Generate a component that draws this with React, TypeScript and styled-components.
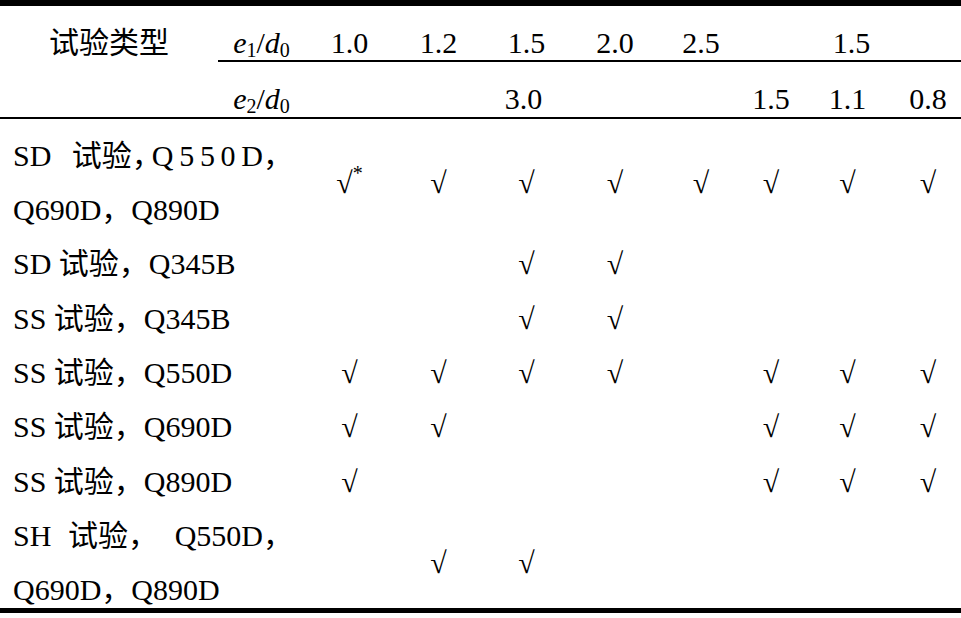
import React from "react";
import styled, { createGlobalStyle } from "styled-components";

const LINE = 54.33;
const FONT = `"Liberation Serif", "Times New Roman", Tinos, "DejaVu Serif", "Noto Sans CJK SC", serif`;

const GlobalStyle = createGlobalStyle`
  html, body { margin: 0; padding: 0; background: #ffffff; }
  body { font-family: ${FONT}; color: #000000; }
`;

const Table = styled.table`
  width: 961px;
  table-layout: fixed;
  border-collapse: separate;
  border-spacing: 0;
  font-family: ${FONT};
  font-size: 30px;
  line-height: ${LINE}px;
  color: #000000;
`;

const Col = styled.col<{ $w: number }>`
  width: ${(p) => p.$w}px;
`;

const HeadCell = styled.th<{ $first?: boolean }>`
  padding: 0;
  font-weight: normal;
  text-align: center;
  vertical-align: baseline;
  white-space: nowrap;
  border-top: ${(p) => (p.$first ? "6px solid #000" : "0")};
  border-bottom: 2px solid #000;
`;

const LabelCell = styled.td<{ $last?: boolean }>`
  padding: 0 12px 0 13px;
  text-align: left;
  vertical-align: baseline;
  white-space: nowrap;
  border-bottom: ${(p) => (p.$last ? "5px solid #000" : "0")};
`;

const MarkCell = styled.td<{ $last?: boolean }>`
  padding: 0;
  text-align: center;
  vertical-align: middle;
  white-space: nowrap;
  border-bottom: ${(p) => (p.$last ? "5px solid #000" : "0")};
`;

const Ink = styled.span`
  display: inline-block;
  line-height: 1;
  vertical-align: -10px;
  white-space: nowrap;
  font-family: ${FONT};
`;

const Ital = styled.i`
  font-style: italic;
`;

const Sub = styled.span`
  font-size: 20px;
  line-height: 0;
  vertical-align: -4px;
`;

const Sup = styled.span`
  font-size: 20px;
  line-height: 0;
  vertical-align: 13px;
`;

const Line = styled.span`
  display: block;
`;

const SpreadLine = styled.span`
  display: block;
  text-align: justify;
  text-align-last: justify;
`;

const Tracked = styled.span<{ $track: number }>`
  letter-spacing: ${(p) => p.$track}px;
`;

const Halt = styled.span`
  font-feature-settings: "halt";
  letter-spacing: 5px;
`;

type Mark = "" | "v" | "v*";

interface Row {
  label: React.ReactNode;
  marks: Mark[];
}

const Ratio: React.FC<{ n: string }> = ({ n }) => (
  <Ink>
    <Ital>e</Ital>
    <Sub>{n}</Sub>/<Ital>d</Ital>
    <Sub>0</Sub>
  </Ink>
);

const rows: Row[] = [
  {
    label: (
      <>
        <SpreadLine>
          <Ink>SD</Ink>{" "}
          <Ink>
            试验<Halt>，</Halt>
            <Tracked $track={5.7}>Q550</Tracked>D，
          </Ink>
        </SpreadLine>
        <Line>
          <Ink>Q690D，Q890D</Ink>
        </Line>
      </>
    ),
    marks: ["v*", "v", "v", "v", "v", "v", "v", "v"],
  },
  {
    label: <Ink>SD 试验，Q345B</Ink>,
    marks: ["", "", "v", "v", "", "", "", ""],
  },
  {
    label: <Ink>SS 试验，Q345B</Ink>,
    marks: ["", "", "v", "v", "", "", "", ""],
  },
  {
    label: <Ink>SS 试验，Q550D</Ink>,
    marks: ["v", "v", "v", "v", "", "v", "v", "v"],
  },
  {
    label: <Ink>SS 试验，Q690D</Ink>,
    marks: ["v", "v", "", "", "", "v", "v", "v"],
  },
  {
    label: <Ink>SS 试验，Q890D</Ink>,
    marks: ["v", "", "", "", "", "v", "v", "v"],
  },
  {
    label: (
      <>
        <SpreadLine>
          <Ink>SH</Ink> <Ink>试验，</Ink> <Ink>Q550D，</Ink>
        </SpreadLine>
        <Line>
          <Ink>Q690D，Q890D</Ink>
        </Line>
      </>
    ),
    marks: ["", "v", "v", "", "", "", "", ""],
  },
];

const widths = [218, 87, 89, 89, 87, 90, 82, 58, 95, 66];

const MarkGlyph: React.FC<{ m: Mark }> = ({ m }) =>
  m === "" ? null : (
    <Ink>
      √{m === "v*" ? <Sup>*</Sup> : null}
    </Ink>
  );

export default function App() {
  return (
    <>
      <GlobalStyle />
      <Table>
        <colgroup>
          {widths.map((w, i) => (
            <Col key={i} $w={w} />
          ))}
        </colgroup>
        <thead>
          <tr>
            <HeadCell $first rowSpan={2}>
              <Ink>试验类型</Ink>
            </HeadCell>
            <HeadCell $first>
              <Ratio n="1" />
            </HeadCell>
            {["1.0", "1.2", "1.5", "2.0", "2.5"].map((v) => (
              <HeadCell $first key={v}>
                <Ink>{v}</Ink>
              </HeadCell>
            ))}
            <HeadCell $first colSpan={3}>
              <Ink>1.5</Ink>
            </HeadCell>
          </tr>
          <tr>
            <HeadCell>
              <Ratio n="2" />
            </HeadCell>
            <HeadCell colSpan={5}>
              <Ink>3.0</Ink>
            </HeadCell>
            {["1.5", "1.1", "0.8"].map((v) => (
              <HeadCell key={v}>
                <Ink>{v}</Ink>
              </HeadCell>
            ))}
          </tr>
        </thead>
        <tbody>
          {rows.map((r, ri) => {
            const last = ri === rows.length - 1;
            return (
              <tr key={ri}>
                <LabelCell colSpan={2} $last={last}>
                  {r.label}
                </LabelCell>
                {r.marks.map((m, mi) => (
                  <MarkCell key={mi} $last={last}>
                    <MarkGlyph m={m} />
                  </MarkCell>
                ))}
              </tr>
            );
          })}
        </tbody>
      </Table>
    </>
  );
}
